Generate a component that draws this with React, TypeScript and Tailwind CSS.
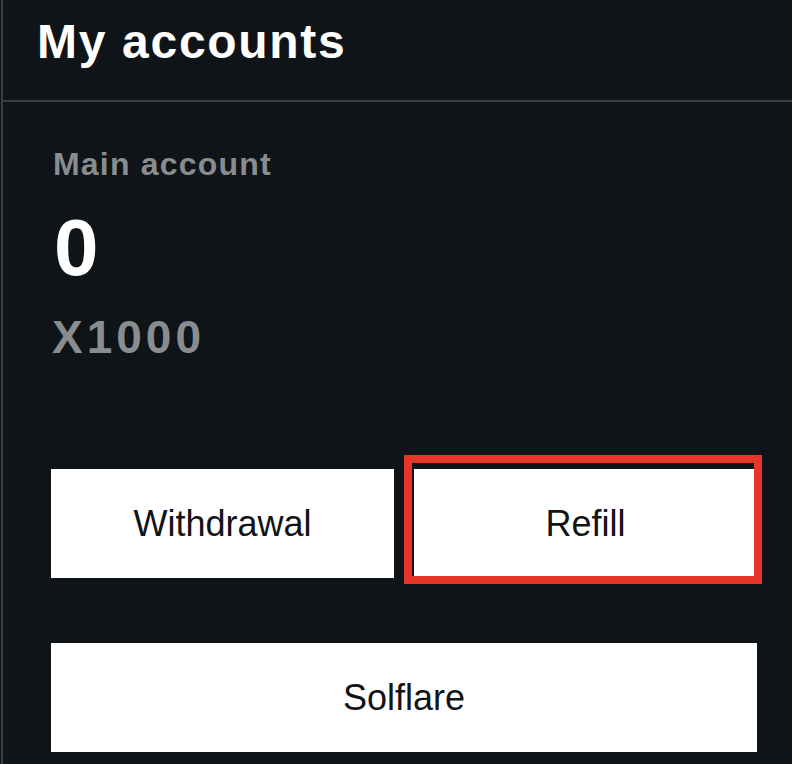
import React from "react";

const sans = { fontFamily: '"Liberation Sans", Arial, sans-serif' };

type AccountButtonProps = {
  label: string;
  highlighted?: boolean;
};

const AccountButton: React.FC<AccountButtonProps> = ({ label, highlighted }) => {
  return (
    <div className="relative">
      <button
        type="button"
        className="flex h-[109px] w-full items-center justify-center bg-white text-[36px] leading-none text-[#111315]"
        style={sans}
      >
        {label}
      </button>
      {highlighted && (
        <div className="pointer-events-none absolute -top-[14px] -left-[10px] -right-[5px] -bottom-[6px] border-[8px] border-[#e8352a]" />
      )}
    </div>
  );
};

export default function App() {
  return (
    <div className="min-h-screen w-full bg-[#0e1418] pl-px" style={sans}>
      <div className="min-h-screen border-l-2 border-[#3b3f43]">
        <header className="h-[102px] border-b-2 border-[#3b3f43] pt-[18px] pl-[34px]">
          <h1 className="text-[48px] font-bold leading-[48px] tracking-[1.7px] text-white">
            My accounts
          </h1>
        </header>

        <section className="pl-[48px] pr-[35px]">
          <p className="mt-[46px] pl-[2px] text-[32px] font-semibold leading-[32px] tracking-[1.2px] text-[#8a8d90]">
            Main account
          </p>
          <p className="mt-[28px] pl-[3px] text-[80px] font-bold leading-[80px] text-white">
            0
          </p>
          <p className="mt-[26px] pl-[1px] text-[46px] font-bold leading-[46px] tracking-[4px] text-[#8a8d90]">
            X1000
          </p>

          <div className="mt-[109px] grid grid-cols-2 gap-[20px]">
            <AccountButton label="Withdrawal" />
            <AccountButton label="Refill" highlighted />
          </div>

          <div className="mt-[65px]">
            <AccountButton label="Solflare" />
          </div>
        </section>
      </div>
    </div>
  );
}
